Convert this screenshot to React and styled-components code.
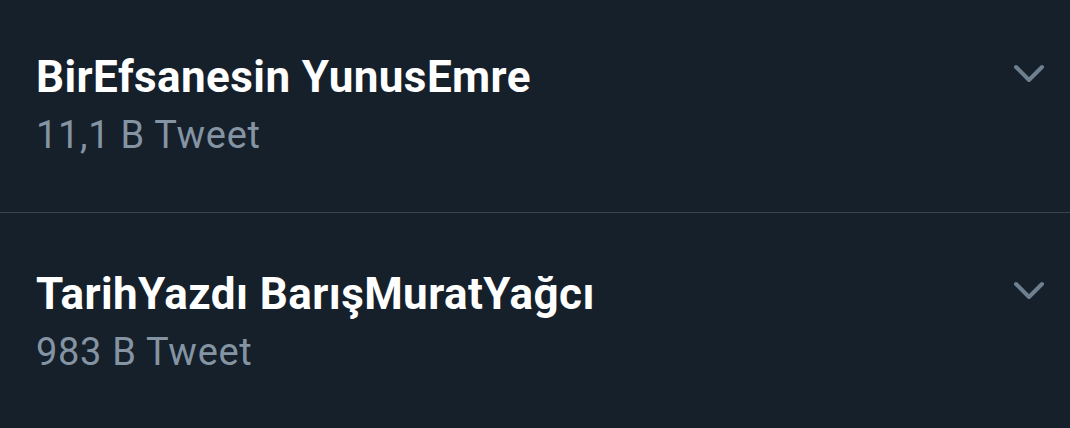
import React from "react";
import styled, { createGlobalStyle } from "styled-components";

const Global = createGlobalStyle`
  html, body { margin: 0; padding: 0; background: #16202b; overflow: hidden; }
  body { font-family: Roboto, "Noto Sans", sans-serif; }
`;

const List = styled.div`
  display: flex;
  flex-direction: column;
  width: 1070px;
`;

const Row = styled.div`
  display: flex;
  align-items: flex-start;
  justify-content: space-between;
  padding: ${(p) => p.$top}px 25px 54px 36px;
  border-bottom: ${(p) => (p.$last ? "none" : "1px solid #38444d")};
`;

const Texts = styled.div`
  display: flex;
  flex-direction: column;
`;

const Title = styled.div`
  font-size: 44px;
  line-height: 52px;
  font-weight: 700;
  letter-spacing: 0.42px;
  color: #ffffff;
`;

const Count = styled.div`
  margin-top: 9px;
  font-size: 38px;
  line-height: 46px;
  font-weight: 400;
  letter-spacing: 0.7px;
  color: #8494a3;
`;

const Chevron = styled.svg`
  display: block;
  width: 32px;
  height: 20px;
  margin-top: ${(p) => p.$offset}px;
  flex-shrink: 0;
`;

const items = [
  { title: "BirEfsanesin YunusEmre", count: "11,1 B Tweet", top: 51 },
  { title: "TarihYazdı BarışMuratYağcı", count: "983 B Tweet", top: 55 },
];

export default function App() {
  return (
    <>
      <Global />
      <List>
        {items.map((it, i) => (
          <Row key={i} $top={it.top} $last={i === items.length - 1}>
            <Texts>
              <Title>{it.title}</Title>
              <Count>{it.count}</Count>
            </Texts>
            <Chevron $offset={13} viewBox="0 0 32 20">
              <path
                d="M3 3 L16 16 L29 3"
                fill="none"
                stroke="#6e7f8f"
                strokeWidth="4"
                strokeLinecap="round"
                strokeLinejoin="round"
              />
            </Chevron>
          </Row>
        ))}
      </List>
    </>
  );
}
